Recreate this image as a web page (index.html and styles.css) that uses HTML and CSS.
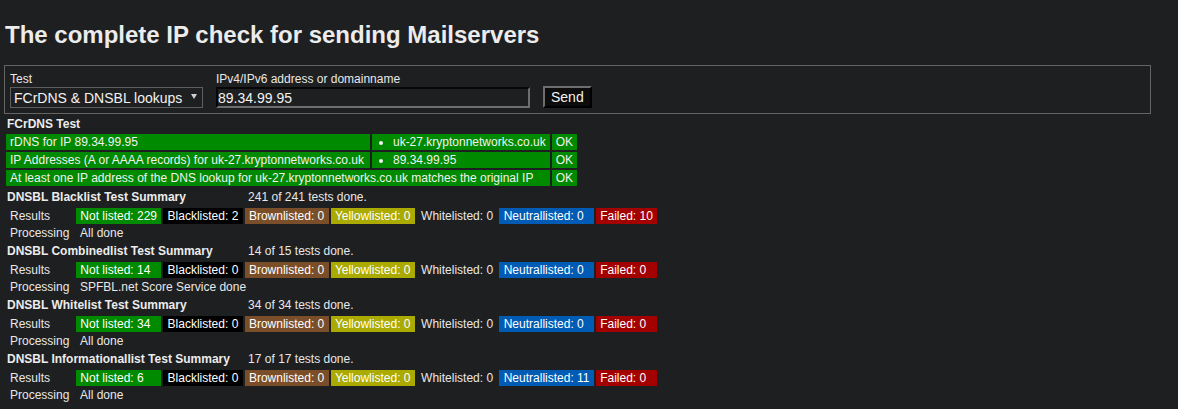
FILE: index.html
```html
<!DOCTYPE html>
<html lang="en">
<head>
<meta charset="utf-8">
<title>The complete IP check for sending Mailservers</title>
<link rel="stylesheet" href="styles.css">
</head>
<body>
<h1 class="title">The complete IP check for sending Mailservers</h1>

<form class="query">
  <div class="field">
    <label class="field-label" for="test">Test</label>
    <div class="select-wrap">
      <select id="test" class="select"><option>FCrDNS &amp; DNSBL lookups</option></select>
    </div>
  </div>
  <div class="field">
    <label class="field-label" for="addr">IPv4/IPv6 address or domainname</label>
    <input id="addr" class="text-input" type="text" value="89.34.99.95">
  </div>
  <button class="send" type="button">Send</button>
</form>

<h2 class="section-title">FCrDNS Test</h2>
<table class="fcrdns">
  <tr>
    <td class="check">rDNS for IP 89.34.99.95</td>
    <td><ul class="addr-list"><li>uk-27.kryptonnetworks.co.uk</li></ul></td>
    <td>OK</td>
  </tr>
  <tr>
    <td class="check">IP Addresses (A or AAAA records) for uk-27.kryptonnetworks.co.uk</td>
    <td><ul class="addr-list"><li>89.34.99.95</li></ul></td>
    <td>OK</td>
  </tr>
  <tr>
    <td colspan="2">At least one IP address of the DNS lookup for uk-27.kryptonnetworks.co.uk matches the original IP</td>
    <td>OK</td>
  </tr>
</table>

<table class="dnsbl">
  <tbody>
    <tr class="sum-head">
      <th colspan="3" class="sum-name">DNSBL Blacklist Test Summary</th>
      <td colspan="5" class="sum-count">241 of 241 tests done.</td>
    </tr>
    <tr class="sum-results">
      <td class="row-label">Results</td>
      <td><span class="badge b-ok">Not listed: 229</span></td>
      <td><span class="badge b-black">Blacklisted: 2</span></td>
      <td><span class="badge b-brown">Brownlisted: 0</span></td>
      <td><span class="badge b-yellow">Yellowlisted: 0</span></td>
      <td><span class="badge b-white">Whitelisted: 0</span></td>
      <td><span class="badge b-neutral">Neutrallisted: 0</span></td>
      <td><span class="badge b-failed">Failed: 10</span></td>
    </tr>
    <tr class="sum-processing">
      <td class="row-label">Processing</td>
      <td colspan="7" class="row-value">All done</td>
    </tr>

    <tr class="sum-head">
      <th colspan="3" class="sum-name">DNSBL Combinedlist Test Summary</th>
      <td colspan="5" class="sum-count">14 of 15 tests done.</td>
    </tr>
    <tr class="sum-results">
      <td class="row-label">Results</td>
      <td><span class="badge b-ok">Not listed: 14</span></td>
      <td><span class="badge b-black">Blacklisted: 0</span></td>
      <td><span class="badge b-brown">Brownlisted: 0</span></td>
      <td><span class="badge b-yellow">Yellowlisted: 0</span></td>
      <td><span class="badge b-white">Whitelisted: 0</span></td>
      <td><span class="badge b-neutral">Neutrallisted: 0</span></td>
      <td><span class="badge b-failed">Failed: 0</span></td>
    </tr>
    <tr class="sum-processing">
      <td class="row-label">Processing</td>
      <td colspan="7" class="row-value">SPFBL.net Score Service done</td>
    </tr>

    <tr class="sum-head">
      <th colspan="3" class="sum-name">DNSBL Whitelist Test Summary</th>
      <td colspan="5" class="sum-count">34 of 34 tests done.</td>
    </tr>
    <tr class="sum-results">
      <td class="row-label">Results</td>
      <td><span class="badge b-ok">Not listed: 34</span></td>
      <td><span class="badge b-black">Blacklisted: 0</span></td>
      <td><span class="badge b-brown">Brownlisted: 0</span></td>
      <td><span class="badge b-yellow">Yellowlisted: 0</span></td>
      <td><span class="badge b-white">Whitelisted: 0</span></td>
      <td><span class="badge b-neutral">Neutrallisted: 0</span></td>
      <td><span class="badge b-failed">Failed: 0</span></td>
    </tr>
    <tr class="sum-processing">
      <td class="row-label">Processing</td>
      <td colspan="7" class="row-value">All done</td>
    </tr>

    <tr class="sum-head">
      <th colspan="3" class="sum-name">DNSBL Informationallist Test Summary</th>
      <td colspan="5" class="sum-count">17 of 17 tests done.</td>
    </tr>
    <tr class="sum-results">
      <td class="row-label">Results</td>
      <td><span class="badge b-ok">Not listed: 6</span></td>
      <td><span class="badge b-black">Blacklisted: 0</span></td>
      <td><span class="badge b-brown">Brownlisted: 0</span></td>
      <td><span class="badge b-yellow">Yellowlisted: 0</span></td>
      <td><span class="badge b-white">Whitelisted: 0</span></td>
      <td><span class="badge b-neutral">Neutrallisted: 11</span></td>
      <td><span class="badge b-failed">Failed: 0</span></td>
    </tr>
    <tr class="sum-processing">
      <td class="row-label">Processing</td>
      <td colspan="7" class="row-value">All done</td>
    </tr>
  </tbody>
</table>
</body>
</html>
```

FILE: styles.css
```css
html {
  background: #1e1f21;
}

body {
  margin: 0;
  padding: 0 4px;
  background: #1e1f21;
  color: #e8e8e8;
  font-family: "Liberation Sans", Arial, sans-serif;
  font-size: 12px;
  line-height: 14px;
}

.title {
  margin: 0 0 16px;
  padding: 21px 0 0 1px;
  font-size: 24px;
  line-height: 28px;
  font-weight: bold;
  color: #ececec;
}

/* query form */
.query {
  display: flex;
  align-items: flex-end;
  gap: 13px;
  width: 98%;
  box-sizing: border-box;
  margin: 0;
  padding: 6px 5px 5px;
  border: 1px solid #646464;
}

.field {
  display: flex;
  flex-direction: column;
}

.field-label {
  display: block;
  line-height: 14px;
  margin-bottom: 1px;
  color: #e8e8e8;
}

.select-wrap {
  position: relative;
}

.select-wrap::after {
  content: "";
  position: absolute;
  left: 181px;
  top: 7px;
  border-left: 3px solid transparent;
  border-right: 3px solid transparent;
  border-top: 5px solid #d0d0d0;
  pointer-events: none;
}

.select {
  -webkit-appearance: none;
  appearance: none;
  display: block;
  width: 193px;
  height: 21px;
  box-sizing: border-box;
  margin: 0;
  padding: 0 16px 0 3px;
  background: #1e1f21;
  color: #f2f2f2;
  border: 1px solid #5e5e5e;
  border-radius: 0;
  font-family: "Liberation Sans", Arial, sans-serif;
  font-size: 14px;
}

.text-input {
  display: block;
  width: 314px;
  height: 21px;
  box-sizing: border-box;
  margin: 0;
  padding: 0;
  background: #1e1f21;
  color: #f2f2f2;
  border: 2px solid;
  border-color: #060606 #6e6e6e #6e6e6e #060606;
  border-radius: 0;
  font-family: "Liberation Sans", Arial, sans-serif;
  font-size: 14px;
}

.send {
  height: 22px;
  box-sizing: border-box;
  margin: 0;
  padding: 0 6px;
  background: #0c0c0c;
  color: #f2f2f2;
  border: 2px solid;
  border-color: #6e6e6e #000 #000 #6e6e6e;
  border-radius: 0;
  font-family: "Liberation Sans", Arial, sans-serif;
  font-size: 14px;
  line-height: 16px;
}

/* FCrDNS */
.section-title {
  margin: 3px 0 0;
  padding-left: 3px;
  font-size: 12px;
  line-height: 14px;
  font-weight: bold;
  color: #ececec;
}

.fcrdns {
  border-collapse: separate;
  border-spacing: 2px;
  margin-top: 1px;
}

.fcrdns td {
  background: #008a00;
  color: #f2f2f2;
  padding: 1px 4px;
  line-height: 14px;
  white-space: nowrap;
  vertical-align: top;
}

.fcrdns td.check {
  padding-right: 6px;
}

.addr-list {
  margin: 0;
  padding-left: 17px;
  list-style: disc;
}

/* DNSBL summaries */
.dnsbl {
  border-collapse: separate;
  border-spacing: 2px 0;
}

.dnsbl th,
.dnsbl td {
  padding: 0;
  text-align: left;
  vertical-align: baseline;
  white-space: nowrap;
  font-weight: normal;
}

.sum-head th,
.sum-head td {
  padding-top: 1px;
  line-height: 17px;
}

.dnsbl .sum-name {
  padding-left: 1px;
  font-weight: bold;
  color: #ececec;
}

.dnsbl .sum-count {
  padding-left: 3.5px;
}

.sum-results td {
  padding-top: 2px;
  line-height: 16px;
}

.sum-processing td {
  padding-top: 1px;
  line-height: 17px;
}

.dnsbl .row-label {
  width: 64px;
  padding-left: 4px;
}

.dnsbl .row-value {
  padding-left: 4px;
}

.badge {
  display: block;
  padding: 0 4.3px;
  line-height: 16px;
  color: #ffffff;
}

.b-ok { background: #008a00; }
.b-black { background: #000000; }
.b-brown { background: #7a4e29; }
.b-yellow { background: #aaaa00; }
.b-white { background: transparent; color: #e8e8e8; }
.b-neutral { background: #005bb5; }
.b-failed { background: #a30000; }
```
